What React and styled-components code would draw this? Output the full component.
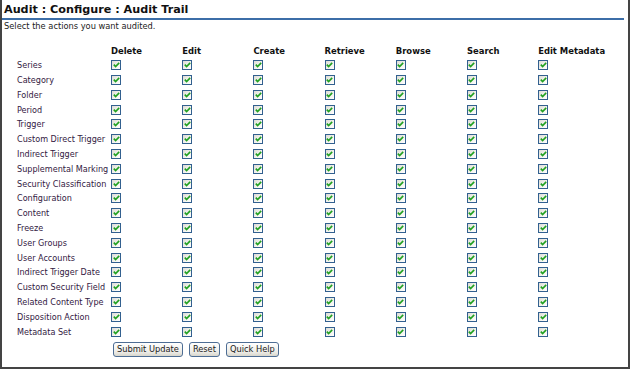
import React from "react";
import styled, { createGlobalStyle } from "styled-components";

const GlobalStyle = createGlobalStyle`
  html, body { margin: 0; padding: 0; background: #ffffff; }
  body { font-family: "DejaVu Sans Condensed", "DejaVu Sans", Tahoma, sans-serif; }
`;

const Frame = styled.div`
  width: 630px;
  height: 369px;
  box-sizing: border-box;
  border-left: 2px solid #444;
  border-right: 2px solid #444;
  border-bottom: 2px solid #444;
  background: #fff;
  overflow: hidden;
`;

const TitleBar = styled.div`
  margin: 0 4px 0 0;
  padding: 3px 0 1px 2px;
  height: 14px;
  border-bottom: 2px solid #3c6ea8;
  font-family: "DejaVu Sans", sans-serif;
  font-size: 11.2px;
  font-weight: bold;
  color: #111;
  line-height: 13px;
`;

const Intro = styled.div`
  padding: 0 0 0 2px;
  font-size: 9.2px;
  color: #222;
  line-height: 12px;
`;

const Grid = styled.div`
  display: grid;
  grid-template-columns: 94px repeat(6, 71.2px) 90px;
  grid-auto-rows: 14.8px;
  margin: 11px 0 0 15px;
  align-items: center;
`;

const Head = styled.div`
  font-size: 9.4px;
  font-weight: bold;
  color: #111;
  white-space: nowrap;
`;

const Label = styled.div`
  font-size: 9px;
  color: #33203f;
  white-space: nowrap;
`;

const Cell = styled.div`
  display: flex;
  align-items: center;
`;

const Box = styled.span`
  width: 10px;
  height: 10px;
  box-sizing: border-box;
  border: 1px solid #32608f;
  background: linear-gradient(135deg, #dcdcd6 0%, #f4f4f0 60%, #ffffff 100%);
  display: inline-flex;
  align-items: center;
  justify-content: center;
`;

const Buttons = styled.div`
  display: flex;
  gap: 6px;
  margin: 3px 0 0 111px;
`;

const Button = styled.button`
  font-family: "DejaVu Sans Condensed", "DejaVu Sans", sans-serif;
  font-size: 9.2px;
  color: #1a1a1a;
  height: 15px;
  padding: 0 3px;
  border: 1px solid #4d6d94;
  border-radius: 3px;
  background: linear-gradient(#ffffff, #ecebe6 70%, #d8d6cc);
  line-height: 12px;
`;

const Check = () => (
  <Box>
    <svg width="7" height="6" viewBox="0 0 7 6">
      <path d="M0.8 2.6 L2.6 4.6 L6.2 0.9" fill="none" stroke="#21a121" strokeWidth="1.6" />
    </svg>
  </Box>
);

const actions = ["Delete", "Edit", "Create", "Retrieve", "Browse", "Search", "Edit Metadata"];
const items = [
  "Series",
  "Category",
  "Folder",
  "Period",
  "Trigger",
  "Custom Direct Trigger",
  "Indirect Trigger",
  "Supplemental Marking",
  "Security Classification",
  "Configuration",
  "Content",
  "Freeze",
  "User Groups",
  "User Accounts",
  "Indirect Trigger Date",
  "Custom Security Field",
  "Related Content Type",
  "Disposition Action",
  "Metadata Set",
];

export default function App() {
  return (
    <>
      <GlobalStyle />
      <Frame>
        <TitleBar>Audit : Configure : Audit Trail</TitleBar>
        <Intro>Select the actions you want audited.</Intro>
        <Grid>
          <div />
          {actions.map((a) => (
            <Head key={a}>{a}</Head>
          ))}
          {items.map((it) => (
            <React.Fragment key={it}>
              <Label>{it}</Label>
              {actions.map((a) => (
                <Cell key={a}>
                  <Check />
                </Cell>
              ))}
            </React.Fragment>
          ))}
        </Grid>
        <Buttons>
          <Button>Submit Update</Button>
          <Button>Reset</Button>
          <Button>Quick Help</Button>
        </Buttons>
      </Frame>
    </>
  );
}
